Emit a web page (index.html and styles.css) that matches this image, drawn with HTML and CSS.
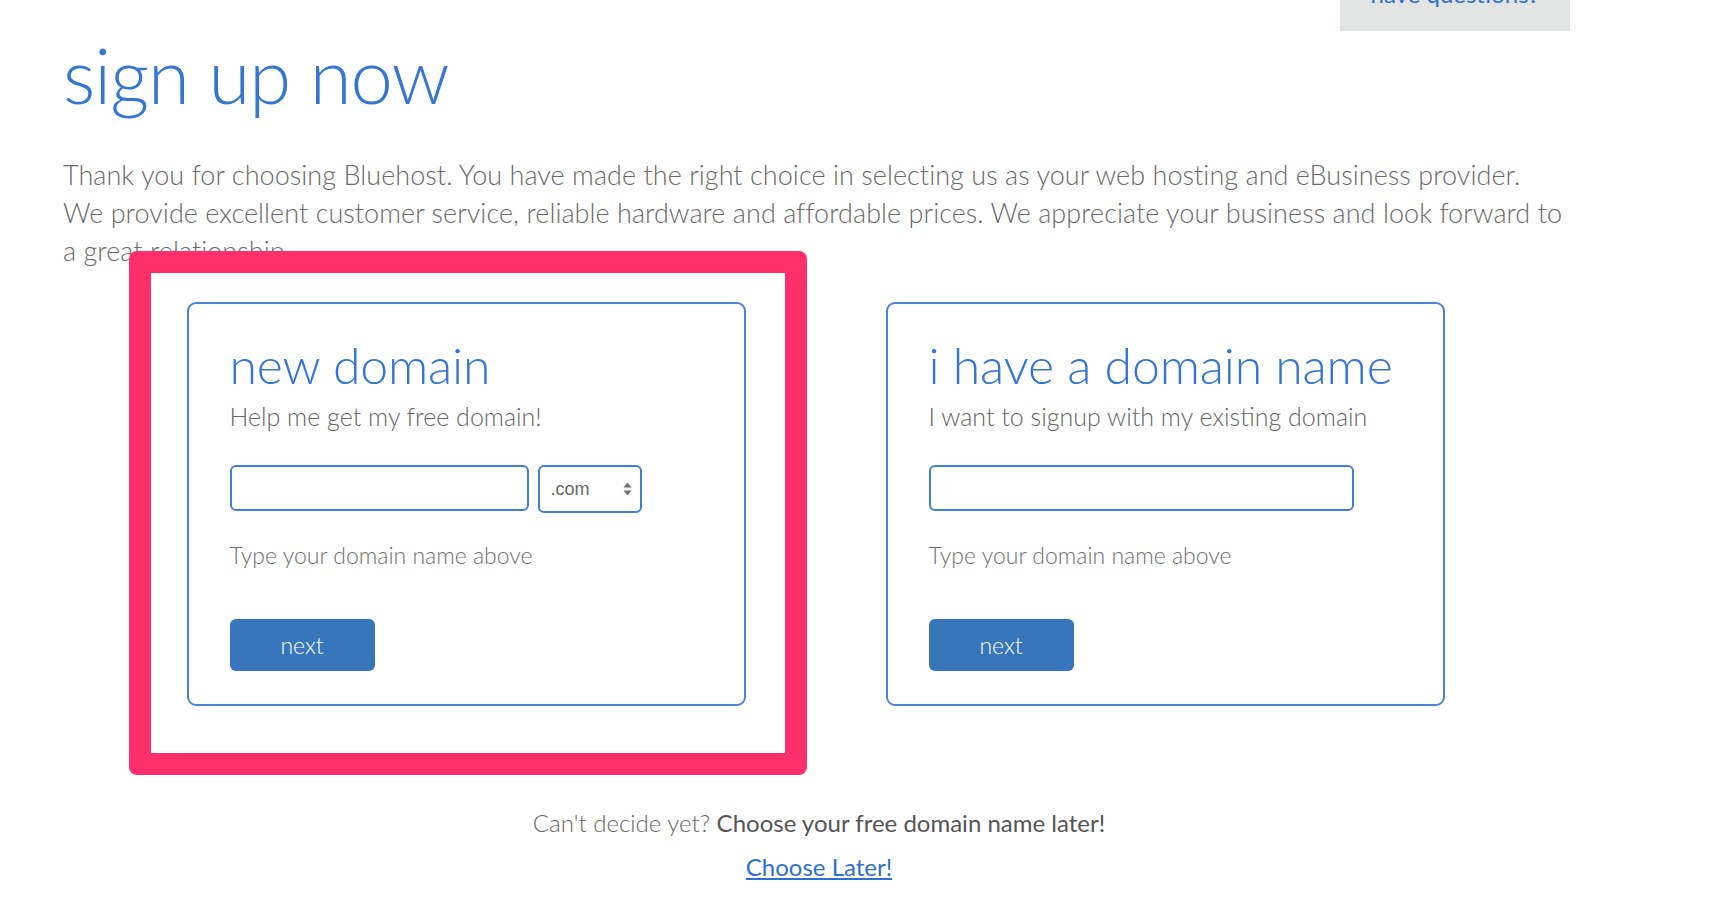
FILE: index.html
```html
<!DOCTYPE html>
<html>
  <head>
    <meta charset="UTF-8">
    <meta name=viewport content="width=device-width, initial-scale=1">

    <link rel="stylesheet" href="styles.css">
  </head>
  <body>
    <div class="container">
      <div class="topbar">
        <a class="questions" href="#">have questions?</a>
      </div>

      <h1 class="page-title">sign up now</h1>
      <p class="intro">Thank you for choosing Bluehost. You have made the right choice in selecting us as your web hosting and eBusiness provider.<br>
        We provide excellent customer service, reliable hardware and affordable prices. We appreciate your business and look forward to a great relationship.</p>

      <div class="choices">
        <div class="choice highlighted">
          <div class="card">
            <h2>new domain</h2>
            <div class="lead">Help me get my free domain!</div>
            <div class="fields">
              <input type="text" class="domain-input short">
              <div class="tld-select">
                <span>.com</span>
                <svg width="9" height="16" viewBox="0 0 9 16">
                  <path d="M4.5 1.5 L8.5 6.5 L0.5 6.5 Z" fill="#707070"/>
                  <path d="M4.5 14.5 L8.5 9.5 L0.5 9.5 Z" fill="#707070"/>
                </svg>
              </div>
            </div>
            <div class="hint">Type your domain name above</div>
            <button class="next">next</button>
          </div>
        </div>

        <div class="choice">
          <div class="card">
            <h2>i have a domain name</h2>
            <div class="lead">I want to signup with my existing domain</div>
            <div class="fields">
              <input type="text" class="domain-input long">
            </div>
            <div class="hint">Type your domain name above</div>
            <button class="next">next</button>
          </div>
        </div>
      </div>

      <div class="later">
        <div class="later-text">Can't decide yet? <strong>Choose your free domain name later!</strong></div>
        <a href="#">Choose Later!</a>
      </div>
    </div>
  </body>
</html>
```

FILE: styles.css
```css
body {
  background-color: #fff;
  color: #666;
  font-family: Lato, "Open Sans", sans-serif;
  font-weight: 300;
  margin: 0;
  overflow: hidden;
}

a, a:visited {
  color: #2f6fd0;
}

.container {
  width: 1512px;
  padding-left: 63px;
}

.topbar {
  display: flex;
  justify-content: flex-end;
}

.questions, .questions:visited {
  display: block;
  background-color: #e3e4e4;
  color: #2f6fd0;
  font-size: 24px;
  line-height: 24px;
  font-weight: 400;
  text-decoration: none;
  margin-top: -18px;
  margin-right: 5px;
  padding: 0 31px 25px;
}

.page-title {
  color: #3575d3;
  font-size: 76px;
  font-weight: 300;
  line-height: 84px;
  margin: 2px 0 0;
  letter-spacing: -1px;
}

.intro {
  width: 1512px;
  font-size: 27px;
  line-height: 38px;
  letter-spacing: 0.05px;
  margin: 39px 0 0;
  color: #6a6a6a;
}

.choices {
  display: flex;
  justify-content: center;
  gap: 140px;
  margin-top: 32px;
  padding-right: 7px;
}

.choice {
  position: relative;
}

.highlighted::before {
  content: "";
  position: absolute;
  left: -58px;
  top: -51px;
  right: -61px;
  bottom: -69px;
  background-color: #fff;
  border: 22px solid #ff2f6b;
  border-radius: 8px;
}

.card {
  position: relative;
  width: 473px;
  height: 340px;
  padding: 30px 41px;
  border: 2px solid #4a84d8;
  border-radius: 9px;
  background-color: #fff;
}

.card h2 {
  color: #3575d3;
  font-size: 50px;
  font-weight: 300;
  line-height: 62px;
  letter-spacing: -0.2px;
  white-space: nowrap;
  margin: 0;
}

.lead {
  font-size: 25px;
  line-height: 32px;
  margin-top: 4px;
}

.fields {
  display: flex;
  align-items: flex-start;
  gap: 9px;
  margin-top: 33px;
  height: 47px;
}

.domain-input {
  box-sizing: border-box;
  height: 46px;
  border: 2px solid #3f7fd6;
  border-radius: 6px;
  outline: none;
  padding: 0 12px;
  font-size: 18px;
}

.domain-input.short {
  width: 299px;
}

.domain-input.long {
  width: 425px;
}

.tld-select {
  box-sizing: border-box;
  width: 104px;
  height: 48px;
  border: 2px solid #3f7fd6;
  border-radius: 6px;
  display: flex;
  align-items: center;
  justify-content: space-between;
  padding: 0 8px 0 11px;
  font-family: "Liberation Sans", Arial, sans-serif;
  font-weight: 400;
  font-size: 18px;
  color: #666;
}

.hint {
  font-size: 23px;
  line-height: 30px;
  margin-top: 28px;
  color: #707070;
}

.next {
  display: block;
  width: 145px;
  height: 52px;
  margin-top: 49px;
  background-color: #3776bb;
  color: #fff;
  border: 0;
  border-radius: 6px;
  font-family: Lato, "Open Sans", sans-serif;
  font-weight: 300;
  font-size: 23px;
  cursor: pointer;
}

.later {
  text-align: center;
  margin-top: 101px;
  width: 1512px;
}

.later-text {
  font-size: 24px;
  line-height: 32px;
  color: #666;
}

.later-text strong {
  font-weight: 400;
  color: #555;
}

.later a {
  display: inline-block;
  margin-top: 12px;
  font-size: 24px;
  line-height: 32px;
  font-weight: 400;
}
```
